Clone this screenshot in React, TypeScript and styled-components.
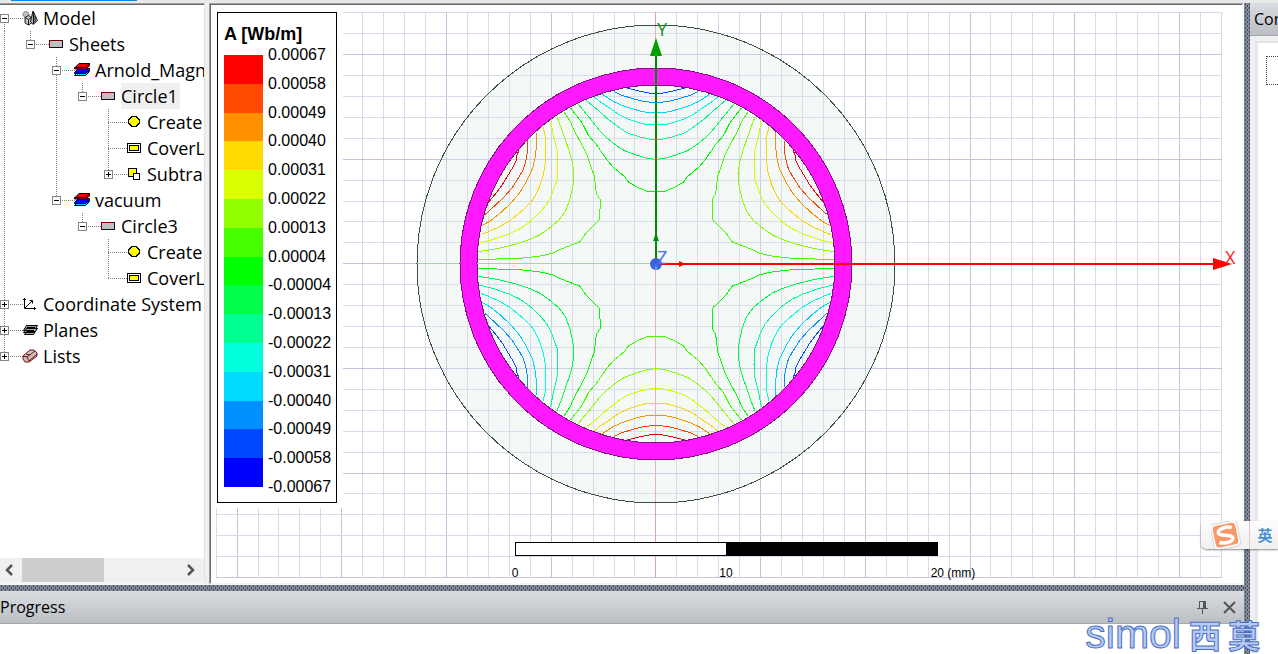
import React from "react";
import styled, { createGlobalStyle, css } from "styled-components";

const GlobalStyle = createGlobalStyle`
  * { box-sizing: border-box; }
  html, body { margin: 0; padding: 0; height: 100%; overflow: hidden; }
  body { font-family: "Open Sans", "Noto Sans", "Noto Sans CJK SC", sans-serif; color: #000; background: #f0f0f0; }
  button { font: inherit; padding: 0; margin: 0; border: 0; background: none; }
  ul { list-style: none; margin: 0; padding: 0; }
`;

const Window = styled.div`
  position: relative;
  display: flex;
  flex-direction: column;
  height: 100vh;
  overflow: hidden;
`;

const TabStrip = styled.div`
  height: 3px;
  flex: none;
  background: #e9e9e9;
  padding-left: 11px;
`;

const ActiveTab = styled.div`
  width: 126px;
  height: 1px;
  background: #0a84e0;
`;

const Body = styled.div`
  display: flex;
  flex: 1;
  min-height: 0;
`;

const MainColumn = styled.div`
  display: flex;
  flex-direction: column;
  flex: 1;
  min-width: 0;
`;

const Workspace = styled.div`
  display: flex;
  flex: 1;
  min-height: 0;
`;

const Splitter = styled.div<{ $vertical?: boolean }>`
  flex: none;
  ${(p) => (p.$vertical ? "width: 6px;" : "height: 6px;")}
  background-color: #858a8e;
  background-size: 4px 4px;
  background-image:
    conic-gradient(from 90deg at 3px 2px, #34487a 0 90deg, transparent 0),
    conic-gradient(from 90deg at 3px 2px, #34487a 0 90deg, transparent 0);
  background-position: 0 0, 2px 2px;
`;

/* ---------- model tree ---------- */

const TreePane = styled.aside`
  display: flex;
  flex-direction: column;
  width: 205px;
  flex: none;
  background: #fff;
  border-top: 1px solid #a0a0a0;
  border-right: 1px solid #e3e3e3;
  border-bottom: 3px solid #f6f6f6;
`;

const TreeList = styled.ul`
  flex: 1;
  overflow: hidden;
  border-top: 1px solid #696969;
`;

const TreeRow = styled.li`
  display: flex;
  height: 26px;
  margin-left: -9px;
  white-space: nowrap;
`;

const dottedDown = "repeating-linear-gradient(to bottom, #808080 0 1px, transparent 1px 2px)";
const dottedAcross = "repeating-linear-gradient(to right, #808080 0 1px, transparent 1px 2px)";

const Guide = styled.span<{ $line: Line }>`
  display: flex;
  align-items: center;
  justify-content: center;
  width: 26px;
  height: 26px;
  flex: none;
  background-repeat: no-repeat;
  ${(p) =>
    p.$line !== "none" &&
    css`
      background-image: ${dottedDown};
      background-position: 13px ${p.$line === "start" ? "13px" : "0"};
      background-size: 1px ${p.$line === "through" ? "26px" : "13px"};
    `}
`;

const Branch = styled(Guide)`
  background-image: ${dottedAcross}${(p) => (p.$line !== "none" ? `, ${dottedDown}` : "")};
  background-position: 13px 13px, 13px ${(p) => (p.$line === "start" ? "13px" : "0")};
  background-size: 13px 1px, 1px ${(p) => (p.$line === "through" ? "26px" : "13px")};
`;

const Expander = styled.button`
  display: block;
  width: 9px;
  height: 9px;
  border: 1px solid #848484;
  background: #fff;
  svg { display: block; }
`;

const IconCell = styled.span`
  display: flex;
  align-items: center;
  justify-content: center;
  width: 26px;
  flex: none;
  background: ${dottedAcross} 1px 13px / 5px 1px no-repeat;
  svg { display: block; }
`;

const NodeLabel = styled.span<{ $selected?: boolean }>`
  padding-right: 2px;
  font-size: 18px;
  line-height: 26px;
  ${(p) => p.$selected && "background: #f0f0f0;"}
`;

const ScrollTrack = styled.div`
  display: flex;
  height: 24px;
  flex: none;
  background: #f0f0f0;
`;

const ScrollArrow = styled.button`
  display: flex;
  align-items: center;
  justify-content: center;
  width: 22px;
  padding-right: 5px;
`;

const ScrollRail = styled.div`
  flex: 1;
`;

const ScrollThumb = styled.div`
  width: 82px;
  height: 24px;
  background: #cdcdcd;
`;

type Line = "none" | "through" | "end" | "start";
type IconName = "model" | "sheet" | "material" | "circle" | "cover" | "subtract" | "axes" | "planes" | "lists";

interface Node {
  label: string;
  icon: IconName;
  guides: Line[];
  branch: Line;
  expand?: "+" | "-";
  selected?: boolean;
}

const nodes: Node[] = [
  { label: "Model", icon: "model", guides: [], branch: "start", expand: "-" },
  { label: "Sheets", icon: "sheet", guides: ["through"], branch: "end", expand: "-" },
  { label: "Arnold_Magn", icon: "material", guides: ["through", "none"], branch: "through", expand: "-" },
  { label: "Circle1", icon: "sheet", guides: ["through", "none", "through"], branch: "end", expand: "-", selected: true },
  { label: "Create", icon: "circle", guides: ["through", "none", "through", "none"], branch: "through" },
  { label: "CoverL", icon: "cover", guides: ["through", "none", "through", "none"], branch: "through" },
  { label: "Subtra", icon: "subtract", guides: ["through", "none", "through", "none"], branch: "end", expand: "+" },
  { label: "vacuum", icon: "material", guides: ["through", "none"], branch: "end", expand: "-" },
  { label: "Circle3", icon: "sheet", guides: ["through", "none", "none"], branch: "end", expand: "-" },
  { label: "Create", icon: "circle", guides: ["through", "none", "none", "none"], branch: "through" },
  { label: "CoverL", icon: "cover", guides: ["through", "none", "none", "none"], branch: "end" },
  { label: "Coordinate System", icon: "axes", guides: [], branch: "through", expand: "+" },
  { label: "Planes", icon: "planes", guides: [], branch: "through", expand: "+" },
  { label: "Lists", icon: "lists", guides: [], branch: "end", expand: "+" },
];

function NodeIcon({ name }: { name: IconName }) {
  const art: Record<IconName, React.ReactNode> = {
    model: (
      <>
        <circle cx="4" cy="4.500" r="3" fill="#c0c0c0" stroke="#333" strokeDasharray="1 1" />
        <path d="M3 7.500l3.500-2 3 2v5.500l-3 2-3.500-2z" fill="#c4c4c4" stroke="#222" />
        <path d="M3 7.500l3.500 2 3-2M6.500 9.500v5.500" fill="none" stroke="#222" />
        <path d="M11 1L8.500 11.500l2.500 3 4.500-4z" fill="#b5b5b5" stroke="#111" />
        <path d="M11.500 2v12M13 6v6" stroke="#111" />
      </>
    ),
    sheet: (
      <g shapeRendering="crispEdges">
        <path d="M1 4h14v8H1z" fill="#c0c0c0" />
        <path d="M1.500 12V4.500H15" fill="none" stroke="#7a0000" />
        <path d="M14.500 4v7.500H1" fill="none" stroke="#111" />
      </g>
    ),
    material: (
      <>
        <path d="M4.500 9.500h11l-4 4H.5z" fill="#00e5ff" stroke="#000" />
        <path d="M4.500 6.500h11v2l-4 3H.5v-1z" fill="#0000ff" stroke="#000" />
        <path d="M5 1.500h11v2l-4 3.500H.5V6z" fill="#f00000" stroke="#000" />
        <path d="M.5 5.500h11l4-4" fill="none" stroke="#000" />
      </>
    ),
    circle: (
      <path
        d="M6 2.500h4l3.500 3.500v3L10 12.500H6L2.500 9V6z"
        fill="#ffff00"
        stroke="#000"
        shapeRendering="crispEdges"
      />
    ),
    cover: (
      <g shapeRendering="crispEdges" fill="none" stroke="#000">
        <path d="M1 3.500h14M1 12.500h14M1.500 3v10M14.500 3v10" />
        <path d="M3.500 5.500h9v5h-9z" fill="#ffff00" />
      </g>
    ),
    subtract: (
      <g shapeRendering="crispEdges">
        <path d="M2.500 2.500h8v8h-8z" fill="#ffff00" stroke="#000" />
        <path d="M7.500 7.500h6v6h-6z" fill="#fff" stroke="#000" />
      </g>
    ),
    axes: (
      <path d="M2.500 2v10.500H14M1 3.500h3M12.500 11v3M3 12l7-7M7.500 4.500h3v3" fill="none" stroke="#000" />
    ),
    planes: (
      <>
        <path d="M4.500 3.500h11l-3 5h-11z" fill="#999" stroke="#000" />
        <path d="M4.500 6.500h11l-3 4h-11zM4.500 9.500h9l-2 3h-9z" fill="#aaa" stroke="#000" />
        <path d="M5 5.500h8M4 8.500h8" stroke="#000" />
      </>
    ),
    lists: (
      <>
        <path d="M1 8l7-6h4l3 3v3l-8 6H3l-2-3z" fill="#c8c0c0" stroke="#7a1010" />
        <path d="M1 8l4 1 2 4M5 9l8-6M7 13l8-7M4 6l4 1" fill="none" stroke="#7a1010" />
      </>
    ),
  };
  return (
    <svg width="16" height="16" viewBox="0 0 16 16" aria-hidden="true">
      {art[name]}
    </svg>
  );
}

function ModelTree() {
  return (
    <TreePane>
      <TreeList>
        {nodes.map((n, i) => (
          <TreeRow key={i}>
            {n.guides.map((g, j) => (
              <Guide key={j} $line={g} />
            ))}
            <Branch $line={n.branch}>
              {n.expand && (
                <Expander aria-label={`Toggle ${n.label}`}>
                  <svg width="7" height="7" shapeRendering="crispEdges">
                    <path d={n.expand === "+" ? "M1 3.500h5M3.500 1v5" : "M1 3.500h5"} stroke="#000" />
                  </svg>
                </Expander>
              )}
            </Branch>
            <IconCell>
              <NodeIcon name={n.icon} />
            </IconCell>
            <NodeLabel $selected={n.selected}>{n.label}</NodeLabel>
          </TreeRow>
        ))}
      </TreeList>
      <ScrollTrack>
        <ScrollArrow aria-label="Scroll left">
          <svg width="10" height="12"><path d="M8 1L3 6l5 5" fill="none" stroke="#555" strokeWidth="2.500" /></svg>
        </ScrollArrow>
        <ScrollRail><ScrollThumb /></ScrollRail>
        <ScrollArrow aria-label="Scroll right">
          <svg width="10" height="12"><path d="M2 1l5 5-5 5" fill="none" stroke="#555" strokeWidth="2.500" /></svg>
        </ScrollArrow>
      </ScrollTrack>
    </TreePane>
  );
}

/* ---------- field plot ---------- */

const PlotPane = styled.main`
  position: relative;
  flex: 1;
  min-width: 0;
  margin-left: 4px;
  background: #fff;
  border-style: solid;
  border-width: 1px 2px 2px 1px;
  border-color: #a0a0a0 #f4f4f4 #f4f4f4 #a0a0a0;
`;

const PlotFrame = styled.div`
  height: 100%;
  border-top: 1px solid #696969;
  border-left: 1px solid #696969;
  overflow: hidden;
  svg { display: block; }
`;

const LegendBacking = styled.div`
  position: absolute;
  top: 1px;
  left: 1px;
  padding: 7px 6px 5px 6px;
  background: #fff;
`;

const Legend = styled.section`
  width: 120px;
  padding: 11px 0 6px 6px;
  border: 1px solid #000;
  font-family: "Liberation Sans", Arial, sans-serif;
`;

const LegendTitle = styled.h2`
  margin: 0;
  font-size: 18px;
  line-height: 20px;
`;

const LegendScale = styled.div`
  display: flex;
  gap: 5px;
  height: 452px;
`;

const LegendBar = styled.div`
  display: flex;
  flex-direction: column;
  width: 39px;
  height: 432px;
  margin-top: 11px;
`;

const Swatch = styled.span<{ $color: string }>`
  flex: 1;
  background: ${(p) => p.$color};
`;

const LegendValues = styled.ul`
  display: flex;
  flex-direction: column;
  justify-content: space-between;
  height: 450px;
  margin-top: 2px;
  font-size: 16px;
  line-height: 18px;
`;

const ramp = [
  "#ff0000", "#ff4800", "#ff9100", "#ffda00", "#daff00", "#91ff00", "#48ff00", "#00ff00",
  "#00ff48", "#00ff91", "#00ffda", "#00daff", "#0091ff", "#0048ff", "#0000ff",
];

const levels = [
  "0.00067", "0.00058", "0.00049", "0.00040", "0.00031", "0.00022", "0.00013", "0.00004",
  "-0.00004", "-0.00013", "-0.00022", "-0.00031", "-0.00040", "-0.00049", "-0.00058", "-0.00067",
];

const lineHot = ["#f00000", "#f84400", "#f89000", "#f8d400", "#d4fa00", "#8cfa00", "#48fa00"];
const lineCold = ["#0048f8", "#0090f8", "#00d4f8", "#00fada", "#00fa91", "#00fa48", "#00fa00"];

/* Flux lines of one quadrant, in thirds of a pixel up and left of the origin. */
const poleLines = [
  "0,511 12,511 32,515 57,520 74,525 87,527",
  "0,484 22,486 47,490 72,497 102,506 127,518",
  "0,454 22,454 52,460 72,466 107,478 127,487 147,500 162,510",
  "0,418 27,418 57,426 87,436 117,452 147,473 167,486 185,501",
  "0,374 17,374 47,381 77,390 97,400 117,414 147,437 177,464 209,491",
  "0,314 27,317 62,328 94,340 117,354 147,378 167,398 197,435 234,480",
  "0,217 27,218 57,231 84,247 94,262 127,289 147,312 177,356 202,385 222,424 257,469",
];
const sideLines = [
  "411,343 417,326 420,308 432,286 447,261 462,236 482,210 504,183",
  "384,371 385,341 389,316 397,286 409,264 432,228 457,200 487,172 512,149",
  "360,395 359,353 362,321 370,288 377,271 392,241 412,210 437,181 467,153 497,129 521,116",
  "339,411 330,376 331,311 337,271 347,238 362,206 376,184 402,160 437,131 467,113 502,97 526,88",
  "316,428 309,391 297,341 294,301 296,256 312,210 327,181 347,156 377,128 407,106 442,90 487,74 530,63",
  "297,441 284,408 272,373 261,341 251,306 246,271 249,236 259,191 272,158 292,131 317,110 347,88 377,74 427,58 477,46 534,37",
  "276,456 259,431 247,404 227,366 207,326 197,296 185,264 179,211 168,194 168,166 171,131 192,111 209,94 229,66 262,54 287,44 312,32 347,24 407,17 477,15 534,13",
];

const originX = 445;
const originY = 259;
const range = (from: number, to: number) => Array.from({ length: to - from + 1 }, (_, i) => from + i);

function fluxPath(points: string, sx: number, sy: number) {
  return points
    .split(" ")
    .map((pair, i) => {
      const [x, y] = pair.split(",").map(Number);
      return `${i ? "L" : "M"}${originX + (sx * x) / 3} ${originY + (sy * y) / 3}`;
    })
    .join("");
}

function FieldPlot() {
  const gx = (k: number) => Math.floor(originX - 0.1 + k * 20.94);
  const gy = (k: number) => Math.floor(originY - 0.2 + k * 20.92);
  const top = gy(-12);
  const bottom = gy(15);
  const left = gx(-21);
  const right = gx(27);
  const tone = (k: number) => (k % 5 === 0 ? "#c3c3de" : "#d9d9ec");
  return (
    <svg width="100%" height="100%" role="img" aria-label="Magnetic vector potential plot">
      <g shapeRendering="crispEdges">
        {range(-21, 27).filter((k) => k % 5).concat(range(-4, 5).map((k) => k * 5)).map((k) => (
          <rect key={`v${k}`} x={gx(k)} y={top} width="1" height={bottom - top + 1} fill={tone(k)} />
        ))}
        {range(-12, 15).map((k) => (
          <rect key={`h${k}`} x={left} y={gy(k)} width={right - left + 1} height="1" fill={tone(k)} />
        ))}
        <rect x={originX - 1} y={top} width="1" height={bottom - top + 1} fill="#e8a0a4" />
        <rect x={originX - 239} y={originY - 1} width="239" height="1" fill="#98c49c" />
        <circle cx={originX} cy={originY} r="239" fill="#dce8e0" fillOpacity=".3" stroke="#3a523e" />

        {[-1, 1].map((sx) =>
          [-1, 1].map((sy) => (
            <g key={`${sx}${sy}`} fill="none">
              {poleLines.map((p, i) => (
                <path key={`p${i}`} d={fluxPath(p, sx, sy)} stroke={(sy < 0 ? lineCold : lineHot)[i]} />
              ))}
              {sideLines.map((p, i) => (
                <path key={`s${i}`} d={fluxPath(p, sx, sy)} stroke={(sy < 0 ? lineHot : lineCold)[i]} />
              ))}
            </g>
          ))
        )}

        <circle cx={originX} cy={originY} r="187" fill="none" stroke="#ff19ff" strokeWidth="17" />
        <circle cx={originX} cy={originY} r="196" fill="none" stroke="#80107c" />
        <circle cx={originX} cy={originY} r="179" fill="none" stroke="#80107c" />

        <rect x={originX - 1} y={originY - 212} width="2" height="212" fill="#008c00" />
        <rect x={originX} y={originY - 1} width="560" height="2" fill="#ff0000" />
      </g>
      <path d={`M${originX} ${originY - 226}l6 18h-12z`} fill="#00a000" />
      <path d={`M${originX} ${originY - 31}l3 8h-6z`} fill="#008c00" />
      <path d={`M${originX + 576} ${originY}l-19 -6v12z`} fill="#ff0000" />
      <path d={`M${originX + 30} ${originY}l-7 -3v6z`} fill="#ff0000" />
      <circle cx={originX} cy={originY} r="6" fill="#3a62dc" />
      <path d={`M${originX} ${originY}l-2 6h4z`} fill="#6f90f0" />
      <g fontFamily="'Open Sans', sans-serif" fontSize="18">
        <text x={originX + 1} y={originY - 228} fill="#128c12">Y</text>
        <text x={originX + 1} y={originY} fill="#4a72e0">Z</text>
        <text x={originX + 569} y={originY} fill="#ff2020">X</text>
      </g>

      <g shapeRendering="crispEdges">
        <rect x="304.500" y="537.500" width="422" height="13" fill="#fff" stroke="#000" />
        <rect x="515" y="537" width="212" height="14" fill="#000" />
      </g>
      <g fontFamily="'Liberation Sans', Arial, sans-serif" fontSize="12" textAnchor="middle">
        <text x="304" y="572">0</text>
        <text x="515" y="572">10</text>
        <text x="742" y="572">20 (mm)</text>
      </g>
    </svg>
  );
}

/* ---------- docked panels ---------- */

const PanelHeader = styled.header`
  display: flex;
  align-items: center;
  flex: none;
  height: 33px;
  overflow: hidden;
  background: linear-gradient(#d9dce1, #bbbec3);
  border-bottom: 1px solid #a8a8a8;
`;

const PanelTitle = styled.h2`
  flex: 1;
  margin: 0;
  font-size: 16px;
  font-weight: 400;
  line-height: 22px;
  white-space: nowrap;
`;

const HeaderButtons = styled.div`
  display: flex;
  gap: 14px;
  padding-right: 8px;
`;

const HeaderButton = styled.button`
  width: 13px;
  height: 14px;
  svg { display: block; }
`;

const ProgressPanel = styled.section`
  flex: none;
  height: 63px;
  background: #fff;
`;

const SidePanel = styled.aside`
  display: flex;
  flex-direction: column;
  width: 28px;
  flex: none;
  overflow: hidden;
  background: #f0f0f0;
  ${PanelHeader} { padding-left: 4px; }
`;

const SideContent = styled.div`
  flex: 1;
  margin: 5px 0 0 5px;
  padding: 13px 0 0 8px;
  background: #fff;
  border-top: 2px solid #e3e3e3;
  border-left: 3px solid #e8e8e8;
`;

const FocusBox = styled.div`
  width: 60px;
  height: 29px;
  border: 1px dotted #444;
`;

/* ---------- overlays ---------- */

const InputBar = styled.div`
  position: absolute;
  right: 0;
  top: 521px;
  display: flex;
  align-items: center;
  width: 77px;
  height: 28px;
  border-radius: 6px 0 0 6px;
  background: linear-gradient(#fdfdfd, #efefef);
  box-shadow: 0 1px 2px rgba(0, 0, 0, 0.45);
`;

const InputLogo = styled.span`
  width: 49px;
  padding-left: 10px;
  border-right: 1px solid #f3c3c3;
  svg { display: block; }
`;

const InputMode = styled.button`
  flex: 1;
  padding-left: 2px;
  font-family: "Noto Sans CJK SC", sans-serif;
  font-size: 15px;
  line-height: 28px;
  font-weight: 700;
  color: #4a90d4;
`;

const Watermark = styled.div`
  position: absolute;
  right: 18px;
  bottom: 0;
  display: flex;
  align-items: center;
  gap: 8px;
  height: 40px;
  color: #b9caf0;
  -webkit-text-stroke: 1px #4670c8;
  pointer-events: none;
`;

const WatermarkLatin = styled.span`
  font-family: "Liberation Sans", Arial, sans-serif;
  font-size: 41px;
  line-height: 40px;
  font-weight: 400;
`;

const WatermarkHan = styled.span`
  display: flex;
  gap: 7px;
  font-family: "Noto Sans CJK SC", sans-serif;
  font-size: 32px;
  line-height: 40px;
  font-weight: 700;
`;

export default function App() {
  return (
    <Window>
      <GlobalStyle />
      <TabStrip><ActiveTab /></TabStrip>
      <Body>
        <MainColumn>
          <Workspace>
            <ModelTree />
            <PlotPane>
              <PlotFrame><FieldPlot /></PlotFrame>
              <LegendBacking>
                <Legend>
                  <LegendTitle>A [Wb/m]</LegendTitle>
                  <LegendScale>
                    <LegendBar>
                      {ramp.map((c) => <Swatch key={c} $color={c} />)}
                    </LegendBar>
                    <LegendValues>
                      {levels.map((v) => <li key={v}>{v}</li>)}
                    </LegendValues>
                  </LegendScale>
                </Legend>
              </LegendBacking>
            </PlotPane>
          </Workspace>
          <Splitter />
          <ProgressPanel>
            <PanelHeader>
              <PanelTitle>Progress</PanelTitle>
              <HeaderButtons>
                <HeaderButton aria-label="Pin">
                  <svg width="13" height="14" shapeRendering="crispEdges">
                    <path d="M3.500 8V1.500h6V8M1 8.500h11M6.500 9v5" fill="none" stroke="#555" />
                    <path d="M7 1h3v7H7z" fill="#555" />
                  </svg>
                </HeaderButton>
                <HeaderButton aria-label="Close">
                  <svg width="13" height="14"><path d="M1 2l11 11M12 2L1 13" stroke="#555" strokeWidth="2" /></svg>
                </HeaderButton>
              </HeaderButtons>
            </PanelHeader>
          </ProgressPanel>
        </MainColumn>
        <Splitter $vertical />
        <SidePanel>
          <PanelHeader><PanelTitle>Con</PanelTitle></PanelHeader>
          <SideContent><FocusBox /></SideContent>
        </SidePanel>
      </Body>
      <InputBar>
        <InputLogo>
          <svg width="30" height="28" viewBox="0 0 30 28" aria-hidden="true">
            <g transform="rotate(-12 15 14)">
              <rect x="1" y="1" width="27" height="26" rx="4" fill="#fff" stroke="#d8d8d8" />
              <rect x="3" y="3" width="23" height="22" rx="4" fill="#f9986a" />
              <path d="M22 8C18 5.500 8 6 8 10.500c0 4 13 3 13 7.500s-9 4.500-14 2" fill="none" stroke="#fff" strokeWidth="3.500" />
            </g>
          </svg>
        </InputLogo>
        <InputMode>英</InputMode>
      </InputBar>
      <Watermark>
        <WatermarkLatin>simol</WatermarkLatin>
        <WatermarkHan><span>西</span><span>莫</span></WatermarkHan>
      </Watermark>
    </Window>
  );
}
